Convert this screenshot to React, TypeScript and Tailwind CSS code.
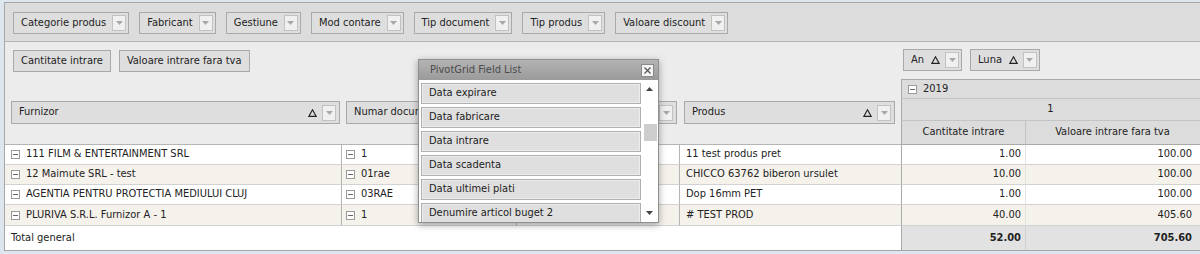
import React from 'react';

const font = "font-['DejaVu_Sans_Condensed','DejaVu_Sans',sans-serif]";

// small dropdown button used in field headers
const DropBtn = ({ tight }: { tight?: boolean }) => (
  <div
    className={`flex h-[16px] w-[14px] shrink-0 items-center justify-center border border-[#c2c2c2] bg-[#f0f0f0] ${tight ? 'ml-[5px]' : 'ml-[6px]'}`}
  >
    <svg width="7" height="4" viewBox="0 0 7 4">
      <path d="M0 0 L7 0 L3.5 4 Z" fill="#a8a8a8" />
    </svg>
  </div>
);

const SortIcon = () => (
  <svg width="9" height="8" viewBox="0 0 9 8" className="ml-[7px] shrink-0">
    <path d="M4.5 0.8 L8.2 7.4 L0.8 7.4 Z" fill="none" stroke="#222" strokeWidth="1.15" />
  </svg>
);

const Collapse = () => (
  <span className="mr-[6px] inline-flex h-[9px] w-[9px] shrink-0 items-center justify-center border border-[#9a9a9a] bg-white">
    <span className="h-px w-[5px] bg-[#666]" />
  </span>
);

const FieldBox = ({ label, sort, drop = true }: { label: string; sort?: boolean; drop?: boolean }) => (
  <div
    className={`flex h-[22px] shrink-0 items-center border border-[#a9a9a9] bg-[#dedede] pl-[7px] ${drop ? 'pr-[2px]' : 'pr-[7px]'}`}
  >
    <span className="whitespace-nowrap">{label}</span>
    {sort && <SortIcon />}
    {drop && <DropBtn tight={sort} />}
  </div>
);

const RowHeader = ({ label }: { label: string }) => (
  <div className="flex h-[23px] w-full items-center overflow-hidden border border-[#a9a9a9] bg-[#dedede] pl-[7px] pr-[3px]">
    <span className="flex-1 whitespace-nowrap">{label}</span>
    <SortIcon />
    <DropBtn tight />
  </div>
);

const rows = [
  { f: '111 FILM & ENTERTAINMENT SRL', n: '1', p: '11 test produs pret', c: '1.00', v: '100.00', h: 'h-[20px]' },
  { f: '12 Maimute SRL - test', n: '01rae', p: 'CHICCO 63762 biberon ursulet', c: '10.00', v: '100.00', h: 'h-[20px]' },
  { f: 'AGENTIA PENTRU PROTECTIA MEDIULUI CLUJ', n: '03RAE', p: 'Dop 16mm PET', c: '1.00', v: '100.00', h: 'h-[20px]' },
  { f: 'PLURIVA S.R.L. Furnizor A - 1', n: '1', p: '# TEST PROD', c: '40.00', v: '405.60', h: 'h-[21px]' },
];

const fields = ['Data expirare', 'Data fabricare', 'Data intrare', 'Data scadenta', 'Data ultimei plati', 'Denumire articol buget 2'];

const FieldList = () => (
  <div className="absolute left-[418px] top-[59px] flex h-[164px] w-[241px] flex-col border border-[#8f8f8f] bg-white shadow-[0_2px_7px_rgba(0,0,0,0.35)]">
    <div className="flex h-[20px] shrink-0 items-center justify-between bg-gradient-to-b from-[#b4b4b4] to-[#9a9a9a] pl-[11px] pr-[4px] text-[#4a4a4a]">
      <span>PivotGrid Field List</span>
      <div className="flex h-[13px] w-[13px] items-center justify-center border border-[#8a8a8a] bg-[#f4f4f4]">
        <svg width="7" height="7" viewBox="0 0 7 7">
          <path d="M0.5 0.5 L6.5 6.5 M6.5 0.5 L0.5 6.5" stroke="#555" strokeWidth="1.2" />
        </svg>
      </div>
    </div>
    <div className="flex min-h-0 flex-1">
      <div className="flex flex-1 flex-col gap-[3px] overflow-hidden pl-[2px] pt-[3px]">
        {fields.map((f) => (
          <div
            key={f}
            className="flex h-[21px] shrink-0 items-center border border-[#b0b0b0] bg-[#dfdfdf] pl-[7px] shadow-[inset_0_0_0_1px_#ececec]"
          >
            {f}
          </div>
        ))}
      </div>
      <div className="relative flex w-[17px] shrink-0 flex-col items-center justify-between py-[7px]">
        <svg width="7" height="4" viewBox="0 0 7 4">
          <path d="M0 4 L7 4 L3.5 0 Z" fill="#444" />
        </svg>
        <div className="absolute left-[3px] top-[44px] h-[17px] w-[13px] bg-[#cdcdcd]" />
        <svg width="7" height="4" viewBox="0 0 7 4">
          <path d="M0 0 L7 0 L3.5 4 Z" fill="#444" />
        </svg>
      </div>
    </div>
  </div>
);

export default function App() {
  return (
    <div className={`relative h-[254px] w-[1200px] overflow-hidden bg-[#dde6ef] pl-[4px] pt-[2px] text-[11px] text-[#222] ${font}`}>
      <div className="w-[1200px] border border-[#a7a7a7] bg-[#ececec]">
        {/* filter area */}
        <div className="flex h-[39px] items-center gap-[10px] border-b border-[#b5b5b5] bg-[#dcdcdc] pl-[8px] pt-[2px]">
          {['Categorie produs', 'Fabricant', 'Gestiune', 'Mod contare', 'Tip document', 'Tip produs', 'Valoare discount'].map((l) => (
            <FieldBox key={l} label={l} />
          ))}
        </div>

        <div className="grid grid-cols-[337px_175px_163px_221px_125px_1fr] grid-rows-[37px_20px_22px_24px_auto_auto_auto_auto_24px]">
          {/* data header area */}
          <div className="col-span-4 flex items-start gap-[8px] pl-[8px] pt-[8px]">
            <FieldBox label="Cantitate intrare" drop={false} />
            <FieldBox label="Valoare intrare fara tva" drop={false} />
          </div>
          {/* column header area */}
          <div className="col-span-2 flex items-start gap-[8px] pl-[2px] pt-[7px]">
            <FieldBox label="An" sort />
            <FieldBox label="Luna" sort />
          </div>

          {/* row header area */}
          <div className="row-span-3 flex items-center border-b border-[#b5b5b5] pl-[6px] pr-[2px] pt-[2px]">
            <RowHeader label="Furnizor" />
          </div>
          <div className="row-span-3 flex items-center border-b border-[#b5b5b5] pl-[4px] pr-[2px] pt-[2px]">
            <RowHeader label="Numar document" />
          </div>
          <div className="row-span-3 flex items-center border-b border-[#b5b5b5] pl-[4px] pr-[3px] pt-[2px]">
            <RowHeader label="Data document" />
          </div>
          <div className="row-span-3 flex items-center border-b border-[#b5b5b5] pl-[4px] pr-[6px] pt-[2px]">
            <RowHeader label="Produs" />
          </div>

          {/* column values */}
          <div className="col-span-2 flex items-center border-l border-t border-b border-[#a9a9a9] border-b-[#c4c4c4] bg-[#dcdcdc] pl-[6px]">
            <Collapse />
            2019
          </div>
          <div className="col-span-2 flex items-center justify-center border-l border-b border-[#a9a9a9] border-b-[#c4c4c4] bg-[#dcdcdc] pr-[4px]">
            1
          </div>
          <div className="flex items-center justify-center border-l border-b border-r border-[#a9a9a9] border-r-[#c4c4c4] bg-[#dcdcdc]">
            Cantitate intrare
          </div>
          <div className="flex items-center justify-center border-b border-[#a9a9a9] bg-[#dcdcdc] pr-[4px]">
            Valoare intrare fara tva
          </div>

          {/* data rows */}
          {rows.map((r, i) => {
            const bg = i % 2 === 0 ? 'bg-white' : 'bg-[#f5f2ec]';
            return (
              <React.Fragment key={i}>
                <div className={`flex items-center border-b border-r border-[#d2d2d2] border-r-[#b4b4b4] pl-[6px] ${r.h} ${bg}`}>
                  <Collapse />
                  <span className="whitespace-nowrap">{r.f}</span>
                </div>
                <div className={`flex items-center border-b border-r border-[#d2d2d2] border-r-[#b4b4b4] pl-[4px] ${bg}`}>
                  <Collapse />
                  {r.n}
                </div>
                <div className={`flex items-center border-b border-r border-[#d2d2d2] border-r-[#b4b4b4] pl-[4px] ${bg}`} />
                <div className={`flex items-center border-b border-[#d2d2d2] pl-[6px] ${bg}`}>
                  <span className="whitespace-nowrap">{r.p}</span>
                </div>
                <div className={`flex items-center justify-end border-b border-l border-r border-[#d2d2d2] border-l-[#a9a9a9] border-r-[#e2e2e2] pr-[4px] ${bg}`}>
                  {r.c}
                </div>
                <div className={`flex items-center justify-end border-b border-[#d2d2d2] pr-[11px] ${bg}`}>
                  {r.v}
                </div>
              </React.Fragment>
            );
          })}

          {/* totals */}
          <div className="col-span-4 flex items-center bg-white pl-[6px]">Total general</div>
          <div className="flex items-center justify-end border-l border-r border-[#a9a9a9] border-r-[#d0d0d0] bg-[#e2e2e2] pr-[4px] font-bold">
            52.00
          </div>
          <div className="flex items-center justify-end bg-[#e2e2e2] pr-[11px] font-bold">705.60</div>
        </div>
      </div>
      <FieldList />
    </div>
  );
}
